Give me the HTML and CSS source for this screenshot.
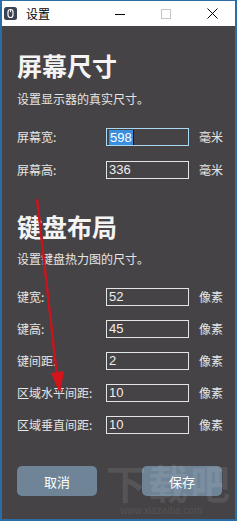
FILE: index.html
```html
<!DOCTYPE html>
<html lang="zh-CN">
<head>
<meta charset="utf-8">
<title>设置</title>
<link rel="stylesheet" href="styles.css">
</head>
<body>
<div class="window">
  <div class="titlebar">
    <div class="app-icon">
      <svg width="13" height="13" viewBox="0 0 13 13"><rect x="0" y="0" width="13" height="13" rx="2.5" fill="#3b4352"/><rect x="4" y="2.5" width="5" height="8" rx="2.5" fill="none" stroke="#fff" stroke-width="1.2"/><line x1="6.5" y1="3.2" x2="6.5" y2="5.2" stroke="#fff" stroke-width="1"/></svg>
    </div>
    <span class="title">设置</span>
    <div class="controls">
      <span class="ctl"><svg width="10" height="10" viewBox="0 0 10 10"><line x1="0" y1="5.5" x2="10" y2="5.5" stroke="#000" stroke-width="1"/></svg></span>
      <span class="ctl"><svg width="10" height="10" viewBox="0 0 10 10"><rect x="0.5" y="0.5" width="9" height="9" fill="none" stroke="#c6c6c6" stroke-width="1"/></svg></span>
      <span class="ctl"><svg width="11" height="11" viewBox="0 0 11 11"><path d="M0.5 0.5 L10.5 10.5 M10.5 0.5 L0.5 10.5" stroke="#000" stroke-width="1"/></svg></span>
    </div>
  </div>
  <div class="content">
    <h1 class="heading">屏幕尺寸</h1>
    <p class="sub">设置显示器的真实尺寸。</p>
    <div class="rows first-rows">
      <div class="row"><span class="label">屏幕宽:</span><span class="field focused"><span class="sel">598</span><span class="caret"></span></span><span class="unit">毫米</span></div>
      <div class="row"><span class="label">屏幕高:</span><span class="field">336</span><span class="unit">毫米</span></div>
    </div>
    <h1 class="heading heading2">键盘布局</h1>
    <p class="sub sub2">设置键盘热力图的尺寸。</p>
    <div class="rows">
      <div class="row"><span class="label">键宽:</span><span class="field">52</span><span class="unit">像素</span></div>
      <div class="row"><span class="label">键高:</span><span class="field">45</span><span class="unit">像素</span></div>
      <div class="row"><span class="label">键间距:</span><span class="field">2</span><span class="unit">像素</span></div>
      <div class="row"><span class="label">区域水平间距:</span><span class="field">10</span><span class="unit">像素</span></div>
      <div class="row"><span class="label">区域垂直间距:</span><span class="field">10</span><span class="unit">像素</span></div>
    </div>
    <div class="buttons">
      <button class="btn">取消</button>
      <button class="btn">保存</button>
    </div>
  </div>
  <div class="watermark"><span class="wm-big">下载吧</span><span class="wm-url">www.xiazaiba.com</span></div>
  <svg class="arrow" width="237" height="521" viewBox="0 0 237 521">
    <line x1="37" y1="199" x2="57" y2="376" stroke="#c8141c" stroke-width="2.4"/>
    <polygon points="51,373 64,371 60,394" fill="#d4141c"/>
  </svg>
</div>
</body>
</html>
```
FILE: styles.css
```css
* { box-sizing: border-box; }
html, body { margin: 0; padding: 0; }
body {
  width: 237px;
  height: 521px;
  overflow: hidden;
  font-family: "Noto Sans CJK SC", "Noto Sans", sans-serif;
}
.window {
  position: relative;
  width: 237px;
  height: 521px;
  overflow: hidden;
  border: 2px solid #2d6da6;
  border-top-width: 1px;
  background: #454345;
  display: flex;
  flex-direction: column;
}
.titlebar {
  height: 25px;
  background: #ffffff;
  display: flex;
  align-items: center;
  padding-left: 2px;
  flex-shrink: 0;
}
.app-icon { width: 13px; height: 13px; display: flex; }
.title {
  margin-left: 9px;
  font-size: 12px;
  color: #000;
  line-height: 16px;
}
.controls {
  display: flex;
  margin-left: auto;
  align-items: center;
}
.ctl {
  width: 46px;
  height: 25px;
  display: flex;
  align-items: center;
  justify-content: center;
}
.content {
  padding: 24px 0 0 15px;
  color: #f0f0f0;
}
.heading {
  margin: 0;
  font-size: 25px;
  line-height: 30px;
  font-weight: 700;
  color: #f4f4f4;
}
.heading2 { margin-top: 32px; }
.sub {
  margin: 11px 0 0 0;
  font-size: 12px;
  line-height: 16px;
  color: #e6e6e6;
}
.sub2 { margin-top: 10px; }
.rows {
  margin-top: 21px;
  display: flex;
  flex-direction: column;
  gap: 14px;
}
.first-rows { gap: 15px; }
.row {
  display: flex;
  align-items: center;
  height: 18px;
  white-space: nowrap;
}
.label {
  width: 89px;
  flex-shrink: 0;
  font-size: 12px;
  color: #e6e6e6;
  line-height: 16px;
}
.field {
  width: 83px;
  height: 18px;
  flex-shrink: 0;
  border: 1px solid #e4e4e4;
  font-family: "Liberation Sans", "Noto Sans", sans-serif;
  font-size: 13px;
  line-height: 16px;
  color: #eeeeee;
  padding-left: 2px;
  display: flex;
  align-items: center;
}
.field.focused { border-color: #a8d8f4; }
.sel {
  background: #3a8fe0;
  color: #fff;
  padding: 0 1px;
  line-height: 15px;
}
.caret {
  width: 1px;
  height: 15px;
  background: #111;
}
.unit {
  margin-left: 10px;
  flex-shrink: 0;
  font-size: 12px;
  color: #e6e6e6;
  line-height: 16px;
}
.buttons {
  margin-top: 32px;
  display: flex;
  gap: 45px;
}
.btn {
  width: 80px;
  height: 30px;
  border: none;
  border-radius: 5px;
  background: #6f8497;
  color: #ffffff;
  font-family: "Noto Sans CJK SC", sans-serif;
  font-size: 13px;
  padding: 0;
}
.watermark {
  position: absolute;
  left: 104px;
  top: 458px;
  display: flex;
  flex-direction: column;
  align-items: flex-start;
  white-space: nowrap;
  pointer-events: none;
}
.wm-big {
  font-size: 40px;
  line-height: 46px;
  font-weight: 700;
  color: rgba(255, 255, 255, 0.10);
  letter-spacing: 2px;
}
.wm-url {
  font-family: "Liberation Sans", sans-serif;
  font-size: 10px;
  line-height: 12px;
  color: rgba(255, 255, 255, 0.10);
  margin-left: 14px;
}
.arrow {
  position: absolute;
  left: -2px;
  top: -1px;
  pointer-events: none;
}
```
